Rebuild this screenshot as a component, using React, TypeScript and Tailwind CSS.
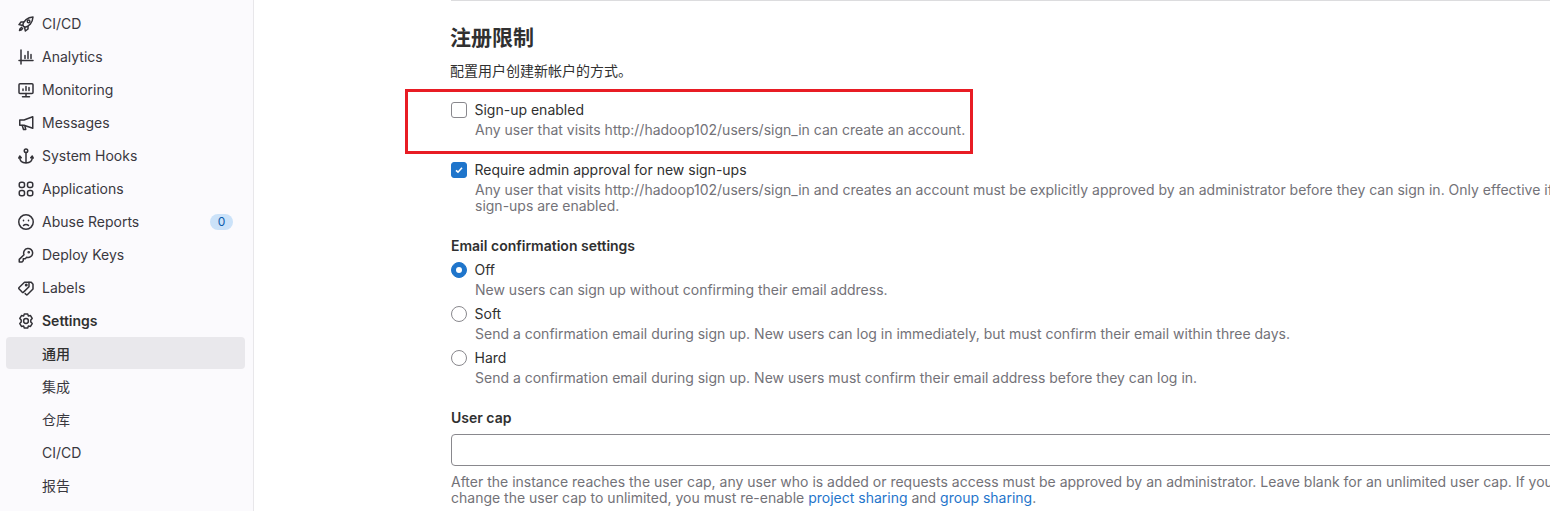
import type { ReactNode } from 'react';

const iconClass = 'h-4 w-4 shrink-0 fill-none stroke-[#333238] stroke-[1.5]';

function Svg({ children }: { children: ReactNode }) {
  return (
    <svg viewBox="0 0 16 16" className={iconClass} strokeLinecap="round" strokeLinejoin="round" aria-hidden="true">
      {children}
    </svg>
  );
}

const icons: Record<string, ReactNode> = {
  rocket: (
    <Svg>
      <path d="M5.600 10.400 4.800 9C5.600 5 9.400 1.400 15 1c-.4 5.600-4 9.400-8 10.200Z" />
      <circle cx="10.600" cy="5.400" r="1.300" />
      <path d="M5.400 6H3L1 8.600l3.700.8M10 10.600V13l-2.600 2-.9-3.700" />
      <path d="M3.600 11.400C2.200 12 1.600 13.200 1.500 14.500c1.300-.1 2.500-.7 3.100-2.100" />
    </Svg>
  ),
  analytics: (
    <Svg>
      <path d="M3 1v14M1 11.500h14" />
      <path d="M7 6.500v3M10 2.500v7M13 5.500v4" />
    </Svg>
  ),
  monitor: (
    <Svg>
      <rect x="1" y="1.750" width="14" height="9.750" rx="1" />
      <path d="M4.500 14.750h7M8 11.500v3.250M5 8.500V7M8 8.500V4.500M11 8.500V5.500" />
    </Svg>
  ),
  messages: (
    <Svg>
      <path d="M14.750 1.750 6 5H1.750v5.250H6l8.750 3Z" />
      <path d="M4.250 10.500 5.500 14.500h2.250l-.75-3.250" />
    </Svg>
  ),
  anchor: (
    <Svg>
      <circle cx="8" cy="2.750" r="1.750" />
      <path d="M8 4.500V15M1.750 8v1.500c0 3.250 2.500 5.250 6.250 5.500 3.750-.25 6.250-2.250 6.250-5.500V8M.75 10l1-2 1.500 1.750M15.250 10l-1-2-1.500 1.750" />
    </Svg>
  ),
  applications: (
    <Svg>
      <rect x="1.250" y="1.250" width="5.250" height="5.250" rx="2" />
      <rect x="9.500" y="1.250" width="5.250" height="5.250" rx="2" />
      <rect x="1.250" y="9.500" width="5.250" height="5.250" rx="2" />
      <rect x="9.500" y="9.500" width="5.250" height="5.250" rx="2" />
    </Svg>
  ),
  abuse: (
    <Svg>
      <circle cx="8" cy="8" r="7.250" />
      <path d="M5.500 11.500c1.200-1.500 3.800-1.500 5 0M5.500 6.250v.5M10.500 6.250v.5" />
    </Svg>
  ),
  key: (
    <Svg>
      <path d="M6 7.700a4.500 4.500 0 1 1 2.700 2.500L7.200 11.750H5.250v2L4 15H1.250V12.400Z" />
      <circle cx="10.750" cy="5.250" r=".6" />
    </Svg>
  ),
  label: (
    <Svg>
      <path d="M1.100 7.500 6.500 2.250H11v4.500L5.500 12.100a1 1 0 0 1-1.400 0L1.100 8.900a1 1 0 0 1 0-1.400Z" />
      <path d="M11 2.250h2.250L15 4.250V9l-5.500 5.500a1 1 0 0 1-1.400 0l-.9-.9" />
      <circle cx="8.250" cy="5" r=".75" />
    </Svg>
  ),
  settings: (
    <Svg>
      <path d="M6.300.950h3.400l.7 2 2.100-.4 1.700 2.900-1.400 1.600v1.900l1.400 1.600-1.700 2.900-2.100-.4-.7 2H6.300l-.7-2-2.100.4-1.700-2.900 1.400-1.600v-1.900L1.800 5.450l1.700-2.900 2.100.4Z" />
      <circle cx="8" cy="8" r="2.400" />
    </Svg>
  ),
};

function NavItem({ icon, label, badge, bold }: { icon: string; label: string; badge?: string; bold?: boolean }) {
  return (
    <div className="mb-px flex h-8 items-center gap-2 px-3">
      {icons[icon]}
      <span className={bold ? 'font-semibold text-[#303030]' : 'text-[#3a383f]'}>{label}</span>
      {badge && (
        <span className="ml-auto flex h-4 w-[23px] items-center justify-center rounded-full bg-[#cbe2f9] text-xs text-[#0b5cad]">
          {badge}
        </span>
      )}
    </div>
  );
}

function SubItem({ label, active }: { label: string; active?: boolean }) {
  return (
    <div
      className={`flex h-8 items-center rounded pl-9 ${
        active ? '-mt-px mb-[2px] bg-[#e9e8ec] pt-px font-medium text-[#303030]' : 'mb-px text-[#3a383f]'
      }`}
    >
      {label}
    </div>
  );
}

function Sidebar() {
  return (
    <aside className="h-[511px] w-[254px] shrink-0 overflow-hidden border-r border-[#e8e7ea] bg-[#fbfafd] pl-[6px] pr-2 pt-2">
      <NavItem icon="rocket" label="CI/CD" />
      <NavItem icon="analytics" label="Analytics" />
      <NavItem icon="monitor" label="Monitoring" />
      <NavItem icon="messages" label="Messages" />
      <NavItem icon="anchor" label="System Hooks" />
      <NavItem icon="applications" label="Applications" />
      <NavItem icon="abuse" label="Abuse Reports" badge="0" />
      <NavItem icon="key" label="Deploy Keys" />
      <NavItem icon="label" label="Labels" />
      <NavItem icon="settings" label="Settings" bold />
      <SubItem label="通用" active />
      <SubItem label="集成" />
      <SubItem label="仓库" />
      <SubItem label="CI/CD" />
      <SubItem label="报告" />
    </aside>
  );
}

function CheckRow({ checked, title, children }: { checked?: boolean; title: string; children: ReactNode }) {
  return (
    <div className="flex gap-[7.5px]">
      <span
        className={`mt-[2px] flex h-4 w-4 shrink-0 items-center justify-center rounded-[3px] border ${
          checked ? 'border-[#1f75cb] bg-[#1f75cb]' : 'border-[#89888d] bg-white'
        }`}
      >
        {checked && (
          <svg viewBox="0 0 8 8" className="h-2 w-2 fill-none stroke-white stroke-[1.6]" aria-hidden="true">
            <path d="M1 4.300 3 6.200 7 1.800" />
          </svg>
        )}
      </span>
      <div className="whitespace-nowrap">
        <div className="h-5 text-[#303030]">{title}</div>
        <div className="pl-[.5px] pt-[2px] leading-4 text-[#737278]">{children}</div>
      </div>
    </div>
  );
}

function RadioRow({ checked, title, help }: { checked?: boolean; title: string; help: string }) {
  return (
    <div className="flex h-11 gap-[7.5px]">
      <span
        className={`mt-[2px] flex h-4 w-4 shrink-0 items-center justify-center rounded-full border ${
          checked ? 'border-[#1f75cb] bg-[#1f75cb]' : 'border-[#89888d] bg-white'
        }`}
      >
        {checked && <span className="h-[6px] w-[6px] rounded-full bg-white" />}
      </span>
      <div className="whitespace-nowrap">
        <div className="h-5 text-[#303030]">{title}</div>
        <div className="pl-[.5px] pt-[2px] leading-4 text-[#737278]">{help}</div>
      </div>
    </div>
  );
}

export default function App() {
  return (
    <div className="flex h-[511px] w-[1550px] overflow-hidden bg-white text-sm font-['Inter','Noto_Sans_CJK_SC',sans-serif]">
      <Sidebar />
      <main className="min-w-0 flex-1 overflow-hidden pl-[197px]">
        <div className="w-[1300px]">
          <div className="h-px bg-[#dcdcde]" />
          <h2 className="-ml-px mt-[24px] h-[26px] text-[21px] font-bold leading-[26px] text-[#303030]">注册限制</h2>
          <p className="-ml-px mt-[10px] h-5 leading-5 text-[#303030]">配置用户创建新帐户的方式。</p>

          <div className="relative mt-[19px]">
            <CheckRow title="Sign-up enabled">Any user that visits http://hadoop102/users/sign_in can create an account.</CheckRow>
            <div className="absolute left-[-46px] top-[-11px] h-[65px] w-[568px] border-[3px] border-[#e81c24]" />
          </div>

          <div className="mt-[22px]">
            <CheckRow checked title="Require admin approval for new sign-ups">
              Any user that visits http://hadoop102/users/sign_in and creates an account must be explicitly approved by an administrator before they can sign in. Only effective if
              <br />
              sign-ups are enabled.
            </CheckRow>
          </div>

          <div className="mt-[22px] h-6 font-semibold leading-5 text-[#303030]">Email confirmation settings</div>
          <RadioRow checked title="Off" help="New users can sign up without confirming their email address." />
          <RadioRow title="Soft" help="Send a confirmation email during sign up. New users can log in immediately, but must confirm their email within three days." />
          <RadioRow title="Hard" help="Send a confirmation email during sign up. New users must confirm their email address before they can log in." />

          <div className="mt-[16px] h-[26px] font-semibold leading-5 text-[#303030]">User cap</div>
          <div className="h-8 w-full rounded border border-[#89888d] bg-white" />
          <p className="mt-2 whitespace-nowrap leading-4 text-[#737278]">
            After the instance reaches the user cap, any user who is added or requests access must be approved by an administrator. Leave blank for an unlimited user cap. If you
            <br />
            change the user cap to unlimited, you must re-enable <span className="text-[#1f75cb]">project sharing</span> and <span className="text-[#1f75cb]">group sharing</span>.
          </p>
        </div>
      </main>
    </div>
  );
}
